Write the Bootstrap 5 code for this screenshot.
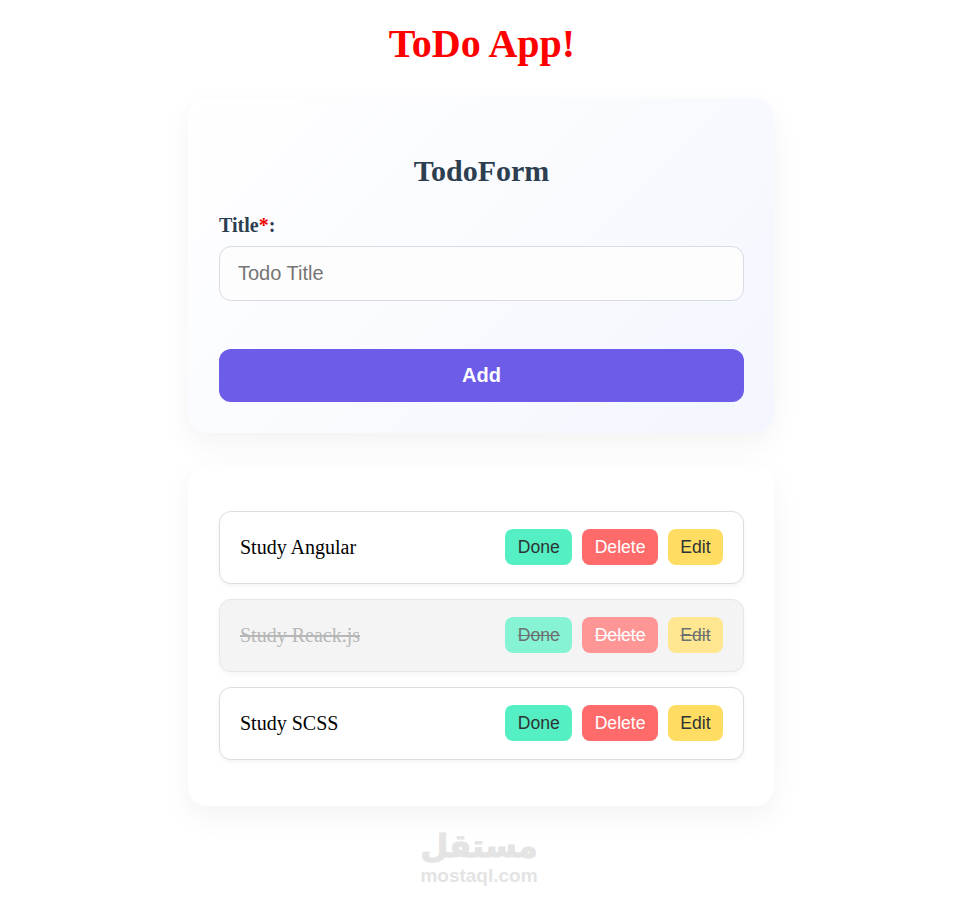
<!DOCTYPE html>
<html lang="en">
<head>
<meta charset="utf-8">
<title>ToDo App</title>
<link href="https://cdn.jsdelivr.net/npm/bootstrap@5.3.0/dist/css/bootstrap.min.css" rel="stylesheet">
<style>
body{background:#fff;font-family:"Liberation Serif",serif;color:#000;height:904px;overflow:hidden;padding-left:2px}
.app-title{font-family:"Liberation Serif",serif;font-weight:700;font-size:40px;line-height:46px;color:#f00;margin:21px 0 31px;padding-left:2px}
.panel-box{width:586px;border-radius:20px;padding:32px 30px 31px 31px;box-shadow:0 10px 30px rgba(0,0,0,.05)}
.form-box{height:335px;background:linear-gradient(135deg,#fff,#f3f6fe);margin-bottom:32px}
.list-box{height:341px;background:#fff;padding-top:46px}
.form-name{font-family:"Liberation Serif",serif;font-weight:700;font-size:30px;line-height:34px;color:#2c3e50;margin:24px 0 26px}
.field-label{font-weight:700;font-size:20px;line-height:23px;color:#2c3e50;margin-bottom:9px;display:block}
.req{color:#e00}
.title-input{height:55px;border:1px solid #d8dbe4;border-radius:12px;background:#fdfdfd;font-family:"Liberation Sans",sans-serif;font-size:20px;padding:0 18px;margin-bottom:48px}
.title-input::placeholder{color:#757575}
.add-btn{height:53px;border:0;border-radius:12px;background:#6c5ce7;color:#fff;font-family:"Liberation Sans",sans-serif;font-weight:700;font-size:20px;padding:0 0 2px}
.add-btn:hover{background:#6c5ce7;color:#fff}
.todo-row{height:73px;border:1px solid #ddd;border-radius:12px;background:#fff;padding:0 20px 2px;margin-bottom:15px;box-shadow:0 2px 5px rgba(0,0,0,.05)}
.todo-row:last-child{margin-bottom:0}
.todo-text{font-size:20px}
.row-done{background:#f0f0f0;opacity:.7}
.row-done .todo-text{text-decoration:line-through;color:#999}
.row-done .act-btn{text-decoration:line-through}
.act-btn{height:36px;border:0;border-radius:8px;padding:0 12.4px;font-family:"Liberation Sans",sans-serif;font-size:17.6px;line-height:36px}
.act-done{background:#55efc4;color:#2d3436}
.act-del{background:#ff6b6b;color:#fff}
.act-edit{background:#ffdd63;color:#2d3436}
.act-gap{gap:10px}
.wm{color:#e4e4e4;line-height:1;margin:21px 4px 0 0}
.wm-ar{font-family:"DejaVu Sans",sans-serif;font-weight:700;font-size:32px;line-height:38px;-webkit-text-stroke:1.2px #e4e4e4}
.wm-en{font-family:"Liberation Sans",sans-serif;font-weight:700;font-size:19px;line-height:22px}
</style>
</head>
<body>
<h1 class="app-title text-center">ToDo App!</h1>
<main class="d-flex flex-column align-items-center">
  <section class="panel-box form-box">
    <h2 class="form-name text-center">TodoForm</h2>
    <form>
      <label class="field-label" for="t">Title<span class="req">*</span>:</label>
      <input id="t" type="text" class="form-control title-input" placeholder="Todo Title">
      <button type="button" class="btn add-btn w-100">Add</button>
    </form>
  </section>
  <section class="panel-box list-box">
    <div class="todo-row d-flex align-items-center justify-content-between">
      <span class="todo-text">Study Angular</span>
      <div class="d-flex act-gap"><button class="btn act-btn act-done">Done</button><button class="btn act-btn act-del">Delete</button><button class="btn act-btn act-edit">Edit</button></div>
    </div>
    <div class="todo-row row-done d-flex align-items-center justify-content-between">
      <span class="todo-text">Study Reack.js</span>
      <div class="d-flex act-gap"><button class="btn act-btn act-done">Done</button><button class="btn act-btn act-del">Delete</button><button class="btn act-btn act-edit">Edit</button></div>
    </div>
    <div class="todo-row d-flex align-items-center justify-content-between">
      <span class="todo-text">Study SCSS</span>
      <div class="d-flex act-gap"><button class="btn act-btn act-done">Done</button><button class="btn act-btn act-del">Delete</button><button class="btn act-btn act-edit">Edit</button></div>
    </div>
  </section>
  <div class="wm text-center">
    <div class="wm-ar" dir="rtl" lang="ar">مستقل</div>
    <div class="wm-en">mostaql.com</div>
  </div>
</main>
<script src="https://cdn.jsdelivr.net/npm/bootstrap@5.3.0/dist/js/bootstrap.bundle.min.js"></script>
</body>
</html>
